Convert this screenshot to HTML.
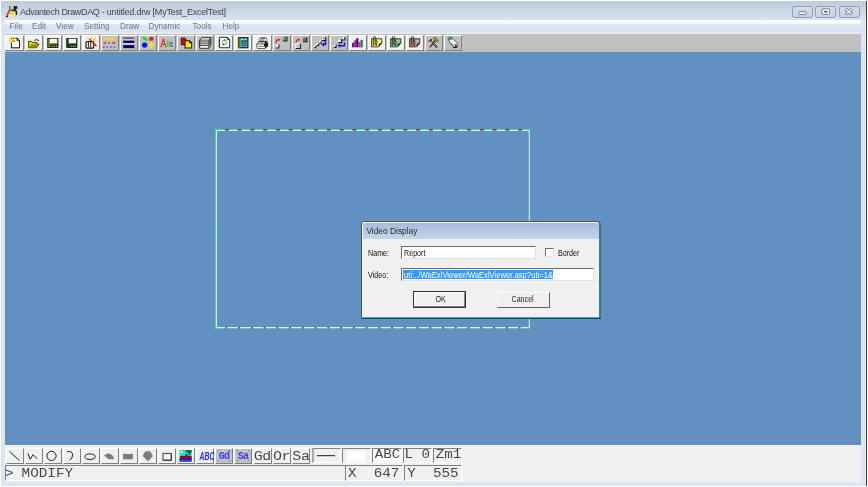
<!DOCTYPE html>
<html>
<head>
<meta charset="utf-8">
<title>Advantech DrawDAQ</title>
<style>
html,body{margin:0;padding:0;}
body{width:868px;height:487px;background:#fff;position:relative;overflow:hidden;font-family:"Liberation Sans",sans-serif;}
.abs{position:absolute;}
#frame{left:1px;top:1px;width:865px;height:485px;background:#dbe5f3;}
#rline{left:866px;top:1px;width:1px;height:485px;background:#3c3c3c;}
#title{left:1px;top:1px;width:865px;height:19px;background:linear-gradient(#bfcbdb,#cbd7e6 50%,#d6e3f1);}
#ttext{left:20px;top:6px;font-size:9px;line-height:12px;letter-spacing:-0.26px;color:#3c444e;white-space:nowrap;}
#menu{left:5px;top:20px;width:856px;height:14.4px;background:linear-gradient(#ffffff 0,#fbfcfe 18%,#eef2f8 30%,#dde6f3 35%,#d6e0ef 80%,#e4e9f0 90%,#e8ecf0 100%);}
.mi{position:absolute;top:21px;font-size:8.2px;line-height:12px;color:#6c7786;white-space:nowrap;}
#tbar{left:5px;top:34px;width:856px;height:18px;background:#c0c0c0;}
.tb{position:absolute;top:1px;width:16.1px;height:14px;border-top:1px solid #fff;border-left:1px solid #fff;border-right:1px solid #808080;border-bottom:1px solid #808080;box-sizing:content-box;background:#c0c0c0;}
.tb.l{background:#f0f0f0;}
.tb svg{position:absolute;left:0;top:0;width:16.1px;height:14px;}
#canvas{left:5px;top:52px;width:856px;height:393.4px;background:#6190c1;}
#bottom{left:5px;top:445.4px;width:856px;height:36.2px;background:#f0f0f0;}
.bb{position:absolute;top:2.6px;width:15.3px;height:14px;border-top:1px solid #fff;border-left:1px solid #fff;border-right:1px solid #808080;border-bottom:1px solid #808080;background:#f0f0f0;}
.bb.g{background:#c0c0c0;}
.bb svg{position:absolute;left:0;top:0;width:15.3px;height:14px;}
.mono{font-family:"Liberation Mono",monospace;color:#484848;white-space:pre;transform:scaleY(0.9);transform-origin:0 78%;}
.sunk{position:absolute;border-top:1px solid #808080;border-left:1px solid #808080;border-right:1px solid #fff;border-bottom:1px solid #fff;box-sizing:border-box;}
#dlg{left:361px;top:221px;width:240px;height:98px;}
#dlgin{left:1px;top:1px;width:238px;height:96px;}
#dlgt{left:1px;top:1px;width:236px;height:15.5px;background:linear-gradient(#a7bbd7,#c4d7ef);border-radius:2px 2px 0 0;}
#dlgc{left:1px;top:16.5px;width:236px;height:78.5px;background:#f0f0f0;}
.dt{position:absolute;font-size:9.5px;line-height:12px;color:#101010;white-space:nowrap;}
.inp{position:absolute;background:#fff;border-top:1px solid #6a6a6a;border-left:1px solid #6a6a6a;border-right:1px solid #e0e0e0;border-bottom:1px solid #e0e0e0;box-sizing:border-box;}
.btn{position:absolute;box-sizing:border-box;background:#f0f0f0;border-top:1px solid #fff;border-left:1px solid #fff;border-right:1px solid #606060;border-bottom:1px solid #606060;font-size:9.5px;line-height:13px;text-align:center;color:#202020;}
.sx{transform:scaleX(0.84);transform-origin:0 0;font-size:8.5px;}
.bt{display:block;transform:scaleX(0.84);transform-origin:50% 50%;font-size:8.5px;line-height:13px;position:relative;}
.bl{position:absolute;left:0;top:2.4px;width:100%;text-align:center;font-size:9.4px;line-height:13.6px;margin-top:-1px;color:#2828f0;font-family:"Liberation Sans",sans-serif;}
.bm{font-family:"Liberation Mono",monospace;font-weight:bold;font-size:10px;letter-spacing:-0.7px;top:2px;color:#3c3cf4;}
.bi{font-style:italic;font-weight:bold;transform:scaleX(0.66);transform-origin:50% 50%;font-size:10.4px;top:2px;}
.d{position:absolute;width:1px;height:1px;background:#707070;}
.bt2{position:absolute;left:-0.9px;top:-0.2px;font-size:15px;line-height:15px;letter-spacing:-0.4px;}
.pt{position:absolute;left:1.4px;top:-1.8px;font-size:14.2px;line-height:15px;}
.st{position:absolute;top:-0.2px;font-size:14.3px;line-height:15px;}
.cap{top:6px;width:21.2px;height:11.5px;box-sizing:border-box;border:1px solid #8f9db3;border-radius:2.5px;background:linear-gradient(#d3ddeb,#c6d2e3);}
</style>
</head>
<body>
<div id="root" class="abs" style="left:0;top:0;width:868px;height:487px;will-change:transform;">
<div id="frame" class="abs"></div>
<div id="rline" class="abs"></div>
<div id="title" class="abs"></div>
<svg class="abs" style="left:5px;top:5px;width:14px;height:13px" viewBox="5 5 14 13">
<path d="M13.6 6 L17.2 6 L17.4 8.6 L15.8 9.6 L17.2 11.6 L17 14.6 L15 16.4 L14 12 Z" fill="#202020"/>
<path d="M8.4 11.6 L15.2 10.8 L16 15.4 L13.6 17 L9.6 16.8 L8 14.6 Z" fill="#f0ee60"/>
<path d="M9.4 13 L14.6 12.2 L15.2 14.8 L12.6 16.2 L9.6 15.4 Z" fill="#f8f890"/>
<path d="M8.8 6 L10.4 6.2 L10.8 9.2 L9.6 9.6 Z" fill="#10a020"/>
<path d="M11.2 6.8 L12.8 6.4 L13 10.8 L11.4 11 Z" fill="#e0d820"/>
<circle cx="9.6" cy="10.6" r="1.3" fill="#d818c8"/>
<circle cx="13.6" cy="10.4" r="1.4" fill="#1838e0"/>
<path d="M11 10.8 L12.8 9.4" stroke="#f02010" stroke-width="1.4"/>
<path d="M8.8 11.6 L7 15.8" stroke="#f01010" stroke-width="1.5"/>
<path d="M5.8 16.4 L8 16.6" stroke="#800808" stroke-width="1.3"/>
<path d="M10 13.2 L13.8 14.4" stroke="#808050" stroke-width="0.7"/>
</svg>
<div id="ttext" class="abs"><span style="letter-spacing:-0.36px">Advantech DrawDAQ</span><span style="letter-spacing:-0.21px"> - untitled.drw [MyTest_ExcelTest]</span></div>
<div class="abs cap" style="left:791.5px"></div>
<div class="abs cap" style="left:815.3px"></div>
<div class="abs cap" style="left:838.5px"></div>
<svg class="abs" style="left:790px;top:5px;width:72px;height:14px" viewBox="790 5 72 14">
<rect x="798.6" y="11.6" width="7.6" height="3" rx="1.3" fill="#eef1f6" stroke="#6c7686" stroke-width="0.9"/>
<rect x="821.8" y="8.8" width="7.8" height="5.6" rx="1" fill="#eef1f6" stroke="#6c7686" stroke-width="0.9"/>
<rect x="824.2" y="11" width="3.2" height="1.4" fill="#404854"/>
<path d="M845.6 8.8 L852 14.4 M852 8.8 L845.6 14.4" stroke="#6c7686" stroke-width="3"/>
<path d="M845.8 9 L851.8 14.2 M851.8 9 L845.8 14.2" stroke="#f4f6fa" stroke-width="1.5"/>
</svg>
<div id="menu" class="abs"></div>
<div class="mi" style="left:9.5px">File</div>
<div class="mi" style="left:32px">Edit</div>
<div class="mi" style="left:56px">View</div>
<div class="mi" style="left:84px">Setting</div>
<div class="mi" style="left:120px">Draw</div>
<div class="mi" style="left:148.5px">Dynamic</div>
<div class="mi" style="left:192.5px">Tools</div>
<div class="mi" style="left:222.5px">Help</div>
<div id="tbar" class="abs">
<div class="tb l" style="left:0.45px"><svg viewBox="0 1.2 16 14.19" preserveAspectRatio="none"><g transform="translate(0 0.7)"><path d="M5.4 2.8 L11 2.8 L13.4 5.2 L13.4 12.4 L5.4 12.4 Z" fill="#fdfdfd" stroke="#202020" stroke-width="1"/><path d="M11 2.8 L11 5.2 L13.4 5.2" fill="none" stroke="#202020" stroke-width="0.9"/><path d="M5.6 12.6 L13.4 12.6" stroke="#606060" stroke-width="0.8"/><g transform="translate(6.6 5)"><path d="M0 0 L-3.6 -2.6 M0 0 L-0.6 -3.4 M0 0 L2.6 -2.8 M0 0 L-3.8 0.6 M0 0 L-2.2 2.8 M0 0 L1.6 2.2 M0 0 L3.6 0.4" stroke="#f0e810" stroke-width="1.1"/><circle cx="0" cy="0" r="1.6" fill="#e0d820"/><circle cx="1.2" cy="0.6" r="0.8" fill="#505038"/><circle cx="0.2" cy="-0.4" r="0.5" fill="#fafaf0"/></g></g></svg></div>
<div class="tb l" style="left:19.52px"><svg viewBox="0 1.2 16 14.19" preserveAspectRatio="none"><g transform="translate(0 0.7)"><path d="M2.6 12.4 L2.6 6 L5.4 6 L6.2 7 L10.6 7 L10.6 8.6 L13 8.6 L10.4 12.4 Z" fill="#e0e000" stroke="#303000" stroke-width="0.9"/><path d="M2.8 12.2 L5.2 8.8 L12.6 8.8 L10.2 12.2 Z" fill="#909000"/><path d="M8.4 5.2 Q10.2 3 12.2 4.8" fill="none" stroke="#101010" stroke-width="0.9"/><path d="M11.4 5.4 L12.8 5.6 L12.8 4.2 Z" fill="#101010"/></g></svg></div>
<div class="tb l" style="left:38.60px"><svg viewBox="0 1.2 16 14.19" preserveAspectRatio="none"><g transform="translate(0 0.7)"><rect x="2.7" y="3" width="10.2" height="9.2" fill="#808000" stroke="#141408" stroke-width="0.8"/><rect x="4.7" y="3.3" width="7.3" height="4.9" fill="#f6f6f6"/><path d="M4.7 8.3 L12 8.3" stroke="#303020" stroke-width="0.5"/><rect x="5.3" y="9.2" width="7.4" height="3" fill="#181810"/><rect x="6.4" y="10.3" width="1.2" height="1.2" fill="#d8d8d8"/><rect x="8.6" y="10.3" width="1.2" height="1.2" fill="#d8d8d8"/><rect x="10.7" y="10.3" width="1.2" height="1.2" fill="#d8d8d8"/></g></svg></div>
<div class="tb l" style="left:57.67px"><svg viewBox="0 1.2 16 14.19" preserveAspectRatio="none"><g transform="translate(0 0.7)"><rect x="2.7" y="3" width="10.2" height="9.2" fill="#005c00" stroke="#141408" stroke-width="0.8"/><rect x="4.7" y="3.3" width="7.3" height="4.9" fill="#f6f6f6"/><path d="M4.7 8.3 L12 8.3" stroke="#303020" stroke-width="0.5"/><rect x="5.3" y="9.2" width="7.4" height="3" fill="#181810"/><rect x="6.4" y="10.3" width="1.2" height="1.2" fill="#d8d8d8"/><rect x="8.6" y="10.3" width="1.2" height="1.2" fill="#d8d8d8"/><rect x="10.7" y="10.3" width="1.2" height="1.2" fill="#d8d8d8"/></g></svg></div>
<div class="tb l" style="left:76.75px"><svg viewBox="0 1.2 16 14.19" preserveAspectRatio="none"><g transform="translate(0 0.7)"><rect x="3" y="6" width="7.6" height="6.8" rx="1" fill="#f0f0f0" stroke="#101010" stroke-width="1.1"/><path d="M5.4 6.6 L5.4 12.2 M7.6 6.6 L7.6 12.2" stroke="#303030" stroke-width="1"/><path d="M6.4 3.6 L13.4 11" stroke="#e81010" stroke-width="1.5"/><path d="M5.6 3.6 L4.2 2.4 M6.6 2.8 L6.6 1.4 M7.6 3.6 L9 2.4" stroke="#e0d820" stroke-width="1"/><circle cx="12.2" cy="3.4" r="1" fill="#f0e020"/><circle cx="10.8" cy="4.6" r="0.8" fill="#60c040"/><circle cx="13" cy="5.4" r="0.7" fill="#f0c020"/></g></svg></div>
<div class="tb g" style="left:95.83px"><svg viewBox="0 1.2 16 14.19" preserveAspectRatio="none"><g transform="translate(0 0.7)"><g transform="translate(-0.5 -0.2)"><rect x="1.9" y="2.6" width="11.8" height="1.6" fill="#e8e020"/><rect x="1.9" y="6.8" width="2.9" height="1.8" fill="#f04040"/><rect x="6.6" y="6.8" width="1.6" height="1.8" fill="#f04040"/><rect x="10.4" y="6.8" width="3.2" height="1.8" fill="#f04040"/><rect x="1.6" y="11.2" width="1.6" height="1.5" fill="#5050f0"/><rect x="5" y="11.2" width="1.5" height="1.5" fill="#5050f0"/><rect x="8.5" y="11.2" width="1.6" height="1.5" fill="#5050f0"/><rect x="12" y="11.2" width="1.6" height="1.5" fill="#5050f0"/></g></g></svg></div>
<div class="tb g" style="left:114.90px"><svg viewBox="0 1.2 16 14.19" preserveAspectRatio="none"><g transform="translate(0 0.7)"><rect x="2.2" y="2" width="11" height="1.2" fill="#383870"/><rect x="2.2" y="3.5" width="11" height="1.6" fill="#d4d0b4"/><rect x="2.2" y="5.2" width="11" height="2.3" fill="#00006a"/><rect x="2.2" y="7.6" width="11" height="2" fill="#d4d0b4"/><rect x="2.2" y="9.7" width="11" height="3.1" fill="#00006a"/></g></svg></div>
<div class="tb g" style="left:133.97px"><svg viewBox="0 1.2 16 14.19" preserveAspectRatio="none"><g transform="translate(0 0.7)"><ellipse cx="5" cy="3.3" rx="3" ry="1.5" transform="rotate(28 5 3.3)" fill="#10e020"/><rect x="9.2" y="1.6" width="4" height="3.6" fill="#f01010"/><circle cx="4.6" cy="9.7" r="2.7" fill="#1010f0"/><path d="M11.4 7.2 L12.5 8.7 L14 9.7 L12.5 10.7 L11.4 12.2 L10.3 10.7 L8.8 9.7 L10.3 8.7 Z" fill="#f4f000" stroke="#f4f000" stroke-width="0.6" stroke-linejoin="round"/></g></svg></div>
<div class="tb g" style="left:153.05px"><svg viewBox="0 1.2 16 14.19" preserveAspectRatio="none"><g transform="translate(0 0.7)"><text x="1.4" y="11.9" font-family="Liberation Sans, sans-serif" font-size="11.4" fill="#f02030" stroke="#f02030" stroke-width="0.35" textLength="5.8" lengthAdjust="spacingAndGlyphs">A</text><text x="7.4" y="11.9" font-family="Liberation Sans, sans-serif" font-weight="bold" font-size="9" fill="#18d828" textLength="3.6" lengthAdjust="spacingAndGlyphs">B</text><text x="11.2" y="11.9" font-family="Liberation Sans, sans-serif" font-weight="bold" font-size="8.8" fill="#1010f0" textLength="2.6" lengthAdjust="spacingAndGlyphs">c</text></g></svg></div>
<div class="tb g" style="left:172.12px"><svg viewBox="0 1.2 16 14.19" preserveAspectRatio="none"><g transform="translate(0 0.7)"><path d="M3.2 2.6 L6.8 2.6 L8.2 4 L8.2 9.4 L3.2 9.4 Z" fill="#f00000" stroke="#281010" stroke-width="0.9"/><path d="M7 5.2 L11.4 5.2 L13.6 7.4 L13.6 12.6 L7 12.6 Z" fill="#f4f000" stroke="#101028" stroke-width="1"/><path d="M11.4 5.2 L11.4 7.4 L13.6 7.4" fill="none" stroke="#101028" stroke-width="0.9"/></g></svg></div>
<div class="tb g" style="left:191.20px"><svg viewBox="0 1.2 16 14.19" preserveAspectRatio="none"><g transform="translate(0 0.7)"><g transform="translate(8 7.6) scale(1.06 1.12) translate(-8 -7.6)"><path d="M3 5 L3 12.4 L11.6 12.4 L13.4 9.8 L13.4 2.8 L5 2.8 Z" fill="#f6f6f6" stroke="#181818" stroke-width="0.8"/><path d="M3 5 L11.6 5 L13.4 2.8 M11.6 5 L11.6 12.4" fill="none" stroke="#181818" stroke-width="0.7"/><path d="M2.2 6.6 L11.6 6.6 L13.4 4.4 M2.2 8.2 L11.6 8.2 L13.4 6 M2.2 9.8 L11.6 9.8 L13.4 7.6" fill="none" stroke="#202020" stroke-width="0.8"/><rect x="3.4" y="7" width="7.8" height="0.9" fill="#b0b0b0"/></g></g></svg></div>
<div class="tb l" style="left:210.27px"><svg viewBox="0 1.2 16 14.19" preserveAspectRatio="none"><g transform="translate(0 0.7)"><path d="M3.4 1.8 L11.2 1.8 L13.6 4.2 L13.6 12.4 L3.4 12.4 Z" fill="#fcfcfc" stroke="#181818" stroke-width="0.9"/><path d="M11.2 1.8 L11.2 4.2 L13.6 4.2" fill="none" stroke="#181818" stroke-width="0.8"/><path d="M2.6 5 L3.6 5 M2.6 7 L3.6 7 M2.6 9 L3.6 9 M2.6 11 L3.6 11" stroke="#101010" stroke-width="0.7"/><circle cx="8.3" cy="7" r="2.2" fill="none" stroke="#58b868" stroke-width="1" stroke-dasharray="2.6 0.9"/><circle cx="8.6" cy="4.6" r="0.9" fill="#108028"/><circle cx="7.6" cy="9.2" r="1" fill="#108028"/></g></svg></div>
<div class="tb l" style="left:229.35px"><svg viewBox="0 1.2 16 14.19" preserveAspectRatio="none"><g transform="translate(0 0.7)"><rect x="3.4" y="2.2" width="9.4" height="10.2" fill="#38b8b8" stroke="#101010" stroke-width="1.1"/><rect x="3.2" y="2.2" width="1.7" height="10.2" fill="#707010"/><rect x="6" y="3.4" width="5.8" height="1" fill="#a0f0f0"/><rect x="6" y="5" width="2.4" height="1.2" fill="#702020"/><rect x="9.3" y="5" width="2.4" height="1.2" fill="#702020"/><path d="M6 7.4 L11.8 7.4 M6 9.2 L11.8 9.2 M6 11 L11.8 11" stroke="#90f0f0" stroke-width="0.9" stroke-dasharray="1.4 0.9"/><path d="M8.85 3.2 L8.85 12 M7.3 6.6 L7.3 12 M10.4 6.6 L10.4 12 M5.4 6.5 L12.2 6.5 M5.4 8.3 L12.2 8.3 M5.4 10.1 L12.2 10.1" stroke="#185858" stroke-width="0.6"/></g></svg></div>
<div class="tb l" style="left:248.42px"><svg viewBox="0 1.2 16 14.19" preserveAspectRatio="none"><g transform="translate(0 0.7)"><path d="M6 2.2 L12 2.2 L13.4 6 L5 6 Z" fill="#e8e8e8" stroke="#404040" stroke-width="0.7"/><path d="M7.4 3 L11 3" stroke="#3030a0" stroke-width="0.9"/><path d="M6.8 4.6 L9.4 4.6" stroke="#902020" stroke-width="0.9"/><path d="M2.4 9.4 L5 6 L11.4 6 L13.6 7.6 L13.6 10.6 L11 13 L3.4 13 Z" fill="#b8b8b8" stroke="#202020" stroke-width="0.8"/><path d="M11.4 6 L13.8 7.6 L13.8 10.6 L11.2 12.8 L9.6 9.6 Z" fill="#202020"/><path d="M2.6 9.6 L9.6 9.6 L11 12.6 L3.6 12.6 Z" fill="#f4f4f4"/><rect x="6.6" y="7.6" width="2.2" height="1.2" fill="#30b040"/><path d="M3.6 11 L10 11" stroke="#404040" stroke-width="0.6"/></g></svg></div>
<div class="tb g" style="left:267.50px"><svg viewBox="0 1.2 16 14.19" preserveAspectRatio="none"><g transform="translate(0 0.7)"><g transform="translate(-0.9 -0.2)"><rect x="9.4" y="0.9" width="4.4" height="4.8" fill="#808080"/><path d="M13.8 1 L13.8 5.8 L9.4 5.8" fill="none" stroke="#202020" stroke-width="1"/><path d="M9.4 5.6 L9.4 1.1 L13.6 1.1" fill="none" stroke="#d0d0d0" stroke-width="0.7"/><path d="M3 8 Q2.6 4.6 5.6 4.4" fill="none" stroke="#f01010" stroke-width="1.1"/><path d="M5.2 2.9 L7.4 4.4 L5.2 6 Z" fill="#f01010"/><rect x="2.4" y="9.4" width="3.2" height="3.2" fill="#f0f0f0"/><path d="M5.8 9.4 L5.8 12.8 L2.4 12.8" fill="none" stroke="#202020" stroke-width="1"/></g></g></svg></div>
<div class="tb g" style="left:286.57px"><svg viewBox="0 1.2 16 14.19" preserveAspectRatio="none"><g transform="translate(0 0.7)"><rect x="9.8" y="2" width="4" height="4.4" fill="#707070"/><path d="M13.8 2 L13.8 6.4 L9.8 6.4" fill="none" stroke="#181818" stroke-width="1.1"/><path d="M3.2 7.4 Q2.8 4.4 5.6 4.2" fill="none" stroke="#f01010" stroke-width="1.1"/><path d="M5.2 2.7 L7.4 4.2 L5.2 5.8 Z" fill="#f01010"/><rect x="2.6" y="8.2" width="4.6" height="4.6" fill="#d8d8d8"/><path d="M2.6 12.8 L2.6 8.2 L7.2 8.2" fill="none" stroke="#fafafa" stroke-width="1"/><path d="M7.4 8.4 L7.4 13.2 L2.8 13.2" fill="none" stroke="#181818" stroke-width="1.1"/><path d="M4.9 8.2 L4.9 13 M2.6 10.6 L7.2 10.6" stroke="#b0b0b0" stroke-width="0.6"/></g></svg></div>
<div class="tb g" style="left:305.65px"><svg viewBox="0 1.2 16 14.19" preserveAspectRatio="none"><g transform="translate(0 0.7)"><rect x="9.8" y="1.1" width="3.8" height="3.8" fill="#f0f0f0"/><path d="M13.7 1.4 L13.7 5 L10 5" fill="none" stroke="#101010" stroke-width="1.1"/><path d="M11.8 1.2 L11.8 4.6 M10 3 L13.4 3" stroke="#707070" stroke-width="0.6"/><path d="M3 12 L9.6 6" stroke="#505050" stroke-width="0.7"/><rect x="1.8" y="10.2" width="2" height="2" fill="#fafafa"/><path d="M4.0 10.6 L4.0 12.5 L2.2 12.5" fill="none" stroke="#101010" stroke-width="1"/><rect x="4.4" y="7.9" width="2" height="2" fill="#fafafa"/><path d="M6.6000000000000005 8.3 L6.6000000000000005 10.2 L4.800000000000001 10.2" fill="none" stroke="#101010" stroke-width="1"/><rect x="7" y="5.5" width="2" height="2" fill="#fafafa"/><path d="M9.2 5.9 L9.2 7.8 L7.4 7.8" fill="none" stroke="#101010" stroke-width="1"/><path d="M13.4 5.8 L13.4 9.2 L11 9.2" fill="none" stroke="#1010f0" stroke-width="1.5"/><path d="M9.3 9.2 L11.9 7.1 L11.9 11.3 Z" fill="#1010f0"/></g></svg></div>
<div class="tb g" style="left:324.72px"><svg viewBox="0 1.2 16 14.19" preserveAspectRatio="none"><g transform="translate(0 0.7)"><rect x="11.2" y="1.1" width="2.5" height="3.3" fill="#e8e8e8"/><path d="M13.8 1.4 L13.8 4.6 L11.4 4.6" fill="none" stroke="#101010" stroke-width="1"/><rect x="7.1" y="4.2" width="3.2" height="2.9" fill="#f4f4f4"/><path d="M10.6 3.6 L10.6 7.3 L7.4 7.3" fill="none" stroke="#101010" stroke-width="1.2"/><path d="M5 10.4 L7.4 8" stroke="#606060" stroke-width="0.7"/><rect x="2.5" y="9.5" width="2.2" height="2.2" fill="#f4f4f4"/><path d="M5 9.8 L5 12.2 L2.8 12.2" fill="none" stroke="#101010" stroke-width="1.1"/><path d="M13.4 7 L13.4 10.4 L8.6 10.4" fill="none" stroke="#1010f0" stroke-width="1.5"/><path d="M6.4 10.4 L9.2 8.4 L9.2 12.4 Z" fill="#1010f0"/></g></svg></div>
<div class="tb l" style="left:343.80px"><svg viewBox="0 1.2 16 14.19" preserveAspectRatio="none"><g transform="translate(0 0.7)"><g transform="translate(-0.6 0)"><path d="M2.4 3.4 L13 3.4 M2.4 5.4 L13 5.4" stroke="#e0e0e0" stroke-width="0.5"/><rect x="2.7" y="7.3" width="2.1" height="4.4" fill="#1818f0"/><rect x="4.8" y="4.9" width="2" height="6.8" fill="#f01010"/><rect x="6.8" y="2.8" width="2.1" height="8.9" fill="#101090"/><rect x="8.9" y="6.6" width="2.1" height="5.1" fill="#f010f0"/><rect x="11" y="4.5" width="2.3" height="7.2" fill="#109030"/><path d="M2.4 12.2 L13.6 12.2" stroke="#b0b0b0" stroke-width="0.8"/></g></g></svg></div>
<div class="tb l" style="left:362.88px"><svg viewBox="0 1.2 16 14.19" preserveAspectRatio="none"><g transform="translate(0 0.7)"><path d="M2.6 3.3 L12.7 3.3 L12.7 7.8 L9.5 11.5 L2.6 11.5 Z" fill="#f0ec58" stroke="#181818" stroke-width="0.8" stroke-linejoin="round"/><path d="M12.9 7.6 L9.9 8.3 L9.5 11.7 Z" fill="#181818"/><path d="M8.6 5.2 L12 5.2 M8.6 6.7 L11.6 6.7" stroke="#fcfcc8" stroke-width="0.8"/><path d="M4.3 10.2 L4.3 2.6 Q4.3 1 5.5 1 Q6.7 1 6.7 2.6 L6.7 9.6 Q6.9 10.4 7.6 9.8 L7.9 5.6 Q7.5 4.4 6.8 5.2" fill="none" stroke="#202020" stroke-width="0.85"/><path d="M5.5 9.8 L5.5 3" stroke="#a09820" stroke-width="0.8"/><path d="M7.2 9 L7.4 6" stroke="#8090b0" stroke-width="0.6"/></g></svg></div>
<div class="tb l" style="left:381.95px"><svg viewBox="0 1.2 16 14.19" preserveAspectRatio="none"><g transform="translate(0 0.7)"><path d="M2.6 3.3 L12.7 3.3 L12.7 7.8 L9.5 11.5 L2.6 11.5 Z" fill="#78b880" stroke="#181818" stroke-width="0.8" stroke-linejoin="round"/><path d="M12.9 7.6 L9.9 8.3 L9.5 11.7 Z" fill="#181818"/><path d="M8.6 5.2 L12 5.2 M8.6 6.7 L11.6 6.7" stroke="#a8d8b0" stroke-width="0.8"/><path d="M4.3 10.2 L4.3 2.6 Q4.3 1 5.5 1 Q6.7 1 6.7 2.6 L6.7 9.6 Q6.9 10.4 7.6 9.8 L7.9 5.6 Q7.5 4.4 6.8 5.2" fill="none" stroke="#202020" stroke-width="0.85"/><path d="M5.5 9.8 L5.5 3" stroke="#407848" stroke-width="0.8"/><path d="M7.2 9 L7.4 6" stroke="#8090b0" stroke-width="0.6"/></g></svg></div>
<div class="tb l" style="left:401.02px"><svg viewBox="0 1.2 16 14.19" preserveAspectRatio="none"><g transform="translate(0 0.7)"><path d="M2.6 3.3 L12.7 3.3 L12.7 7.8 L9.5 11.5 L2.6 11.5 Z" fill="#c09890" stroke="#181818" stroke-width="0.8" stroke-linejoin="round"/><path d="M12.9 7.6 L9.9 8.3 L9.5 11.7 Z" fill="#181818"/><path d="M8.6 5.2 L12 5.2 M8.6 6.7 L11.6 6.7" stroke="#dcc0b8" stroke-width="0.8"/><path d="M4.3 10.2 L4.3 2.6 Q4.3 1 5.5 1 Q6.7 1 6.7 2.6 L6.7 9.6 Q6.9 10.4 7.6 9.8 L7.9 5.6 Q7.5 4.4 6.8 5.2" fill="none" stroke="#202020" stroke-width="0.85"/><path d="M5.5 9.8 L5.5 3" stroke="#805850" stroke-width="0.8"/><path d="M7.2 9 L7.4 6" stroke="#8090b0" stroke-width="0.6"/></g></svg></div>
<div class="tb g" style="left:420.10px"><svg viewBox="0 1.2 16 14.19" preserveAspectRatio="none"><g transform="translate(0 0.7)"><path d="M3.8 12 L9.4 5.2" stroke="#582020" stroke-width="1.4"/><path d="M7.4 2.6 L9.4 1.6 L12.6 5.4 L11.6 6.8 L9.8 5.2 L8.6 5.6 Z" fill="#a0a018" stroke="#303000" stroke-width="0.5"/><path d="M11 12 L6 6.4" stroke="#202020" stroke-width="1.9"/><path d="M10.6 11.6 L6.4 6.8" stroke="#c8c8c8" stroke-width="0.7"/><path d="M5.6 3.6 Q6.4 6.2 4 6.4 Q2 6.2 2.2 4.6 L3.6 5.2 L4.6 4.6 L4.2 3.4 Z" fill="#181818"/></g></svg></div>
<div class="tb g" style="left:439.17px"><svg viewBox="0 1.2 16 14.19" preserveAspectRatio="none"><g transform="translate(0 0.7)"><path d="M2.8 2.2 L6.6 1.4 L7.4 3.2 L3.8 4.4 Z" fill="#10b0b0" stroke="#106060" stroke-width="0.5"/><path d="M3.8 4.4 L7.4 3.2 L11.4 6.8 L12.6 9.2 L12.4 11.4 L11 11.6 L10.6 10 L9.6 12.2 L8 12.2 L8.2 9.8 L7 10.2 L6.4 8 L5 8.2 Z" fill="#f8f8f8" stroke="#383838" stroke-width="0.7"/><path d="M10.4 9.8 L11 8.4 M8.4 9.8 L9 8.6" stroke="#404040" stroke-width="0.7" fill="none"/><path d="M8.4 12.4 L12.2 11.8" stroke="#202020" stroke-width="1.1"/><path d="M10.2 9.2 L12 10.8 M9.6 10.6 L10.6 12" stroke="#202020" stroke-width="0.9"/></g></svg></div>
</div>
<div id="canvas" class="abs">
<svg class="abs" style="left:0;top:0;width:856px;height:393.4px" viewBox="5 52 856 393.4">
<rect x="215.5" y="129.5" width="314" height="199" fill="none" stroke="#48d8a0" stroke-width="1"/>
<rect x="216.5" y="130.5" width="312" height="197" fill="none" stroke="#e4e6ee" stroke-width="1"/>
<path d="M529.5 130 L529.5 328" stroke="#a8f0d0" stroke-width="1"/>
<path d="M528.5 132 L528.5 327" stroke="#7ca4cc" stroke-width="1"/>
<rect x="224.90" y="129" width="4" height="1.6" fill="#604848"/><rect x="237.65" y="129" width="4" height="1.6" fill="#604848"/><rect x="250.40" y="129" width="4" height="1.6" fill="#604848"/><rect x="263.15" y="129" width="4" height="1.6" fill="#604848"/><rect x="275.90" y="129" width="4" height="1.6" fill="#604848"/><rect x="288.65" y="129" width="4" height="1.6" fill="#604848"/><rect x="301.40" y="129" width="4" height="1.6" fill="#604848"/><rect x="314.15" y="129" width="4" height="1.6" fill="#604848"/><rect x="326.90" y="129" width="4" height="1.6" fill="#604848"/><rect x="339.65" y="129" width="4" height="1.6" fill="#604848"/><rect x="352.40" y="129" width="4" height="1.6" fill="#604848"/><rect x="365.15" y="129" width="4" height="1.6" fill="#604848"/><rect x="377.90" y="129" width="4" height="1.6" fill="#604848"/><rect x="390.65" y="129" width="4" height="1.6" fill="#604848"/><rect x="403.40" y="129" width="4" height="1.6" fill="#604848"/><rect x="416.15" y="129" width="4" height="1.6" fill="#604848"/><rect x="428.90" y="129" width="4" height="1.6" fill="#604848"/><rect x="441.65" y="129" width="4" height="1.6" fill="#604848"/><rect x="454.40" y="129" width="4" height="1.6" fill="#604848"/><rect x="467.15" y="129" width="4" height="1.6" fill="#604848"/><rect x="479.90" y="129" width="4" height="1.6" fill="#604848"/><rect x="492.65" y="129" width="4" height="1.6" fill="#604848"/><rect x="505.40" y="129" width="4" height="1.6" fill="#604848"/><rect x="518.15" y="129" width="4" height="1.6" fill="#604848"/><rect x="225.30" y="327.1" width="2" height="1.5" fill="#604848"/><rect x="238.05" y="327.1" width="2" height="1.5" fill="#604848"/><rect x="250.80" y="327.1" width="2" height="1.5" fill="#604848"/><rect x="263.55" y="327.1" width="2" height="1.5" fill="#604848"/><rect x="276.30" y="327.1" width="2" height="1.5" fill="#604848"/><rect x="289.05" y="327.1" width="2" height="1.5" fill="#604848"/><rect x="301.80" y="327.1" width="2" height="1.5" fill="#604848"/><rect x="314.55" y="327.1" width="2" height="1.5" fill="#604848"/><rect x="327.30" y="327.1" width="2" height="1.5" fill="#604848"/><rect x="340.05" y="327.1" width="2" height="1.5" fill="#604848"/><rect x="352.80" y="327.1" width="2" height="1.5" fill="#604848"/><rect x="365.55" y="327.1" width="2" height="1.5" fill="#604848"/><rect x="378.30" y="327.1" width="2" height="1.5" fill="#604848"/><rect x="391.05" y="327.1" width="2" height="1.5" fill="#604848"/><rect x="403.80" y="327.1" width="2" height="1.5" fill="#604848"/><rect x="416.55" y="327.1" width="2" height="1.5" fill="#604848"/><rect x="429.30" y="327.1" width="2" height="1.5" fill="#604848"/><rect x="442.05" y="327.1" width="2" height="1.5" fill="#604848"/><rect x="454.80" y="327.1" width="2" height="1.5" fill="#604848"/><rect x="467.55" y="327.1" width="2" height="1.5" fill="#604848"/><rect x="480.30" y="327.1" width="2" height="1.5" fill="#604848"/><rect x="493.05" y="327.1" width="2" height="1.5" fill="#604848"/><rect x="505.80" y="327.1" width="2" height="1.5" fill="#604848"/><rect x="518.55" y="327.1" width="2" height="1.5" fill="#604848"/>
<circle cx="215.3" cy="129.2" r="1.4" fill="none" stroke="#30c890" stroke-width="0.8"/>
<circle cx="529.6" cy="129.2" r="1.6" fill="#38c890"/>
<circle cx="215.3" cy="328.6" r="1.4" fill="none" stroke="#30c890" stroke-width="0.8"/>
<circle cx="214.8" cy="229" r="1" fill="#38d098"/>
</svg>
</div>
<div id="bottom" class="abs">
<div class="bb " style="left:1.30px"><svg viewBox="0 0.5 15.3 14" preserveAspectRatio="none"><path d="M2.5 2.8 L12.3 12" stroke="#202020" stroke-width="1" fill="none"/></svg></div>
<div class="bb " style="left:20.30px"><svg viewBox="0 0.5 15.3 14" preserveAspectRatio="none"><path d="M1.9 5 L4.2 10.8 L7.1 6.2 L11.1 10.2" stroke="#202020" stroke-width="1" fill="none"/></svg></div>
<div class="bb " style="left:39.30px"><svg viewBox="0 0.5 15.3 14" preserveAspectRatio="none"><circle cx="6.5" cy="7.4" r="4.6" stroke="#202020" stroke-width="1" fill="none"/></svg></div>
<div class="bb " style="left:58.30px"><svg viewBox="0 0.5 15.3 14" preserveAspectRatio="none"><path d="M3.1 3.3 Q8.2 2 8.6 6.2 Q8.6 10.4 5.6 11.8" stroke="#202020" stroke-width="1" fill="none"/></svg></div>
<div class="bb " style="left:77.30px"><svg viewBox="0 0.5 15.3 14" preserveAspectRatio="none"><ellipse cx="7.1" cy="8.2" rx="5.3" ry="2.8" stroke="#202020" stroke-width="1" fill="none"/></svg></div>
<div class="bb " style="left:96.30px"><svg viewBox="0 0.5 15.3 14" preserveAspectRatio="none"><path d="M2.1 7 Q5.5 4 8.6 5.6 Q11.8 7.4 11.9 10.8 L6.6 10.8 Z" fill="#7c7c7c"/></svg></div>
<div class="bb " style="left:115.30px"><svg viewBox="0 0.5 15.3 14" preserveAspectRatio="none"><rect x="2.1" y="5.4" width="9.8" height="5.4" fill="#7c7c7c"/></svg></div>
<div class="bb " style="left:134.30px"><svg viewBox="0 0.5 15.3 14" preserveAspectRatio="none"><path d="M5.2 2.7 L10.4 2.7 L12.8 7.4 L8 13.1 L2.7 7.4 Z" fill="#7c7c7c"/></svg></div>
<div class="bb " style="left:153.30px"><svg viewBox="0 0.5 15.3 14" preserveAspectRatio="none"><rect x="4" y="5" width="8.2" height="6.6" fill="#f8f8f8" stroke="#585858" stroke-width="1.2"/><path d="M12.4 5.4 L12.4 11.9 L4.4 11.9" fill="none" stroke="#303030" stroke-width="0.9"/></svg></div>
<div class="bb " style="left:172.30px"><svg viewBox="0 0.5 15.3 14" preserveAspectRatio="none"><rect x="1.5" y="1.6" width="12.1" height="11.5" fill="#10d8f0"/><rect x="1.5" y="9.6" width="12.1" height="3.5" fill="#1010f0"/><circle cx="3.6" cy="3.4" r="1.5" fill="#f0f020"/><path d="M7.5 1.6 L13.6 1.6 L13.6 4.6 L10.8 5 L8.4 3.6 Z" fill="#107030"/><path d="M11.4 4 L11.4 7" stroke="#503010" stroke-width="1"/><path d="M2 7.4 L7 7.4 L8.2 5.4 L9.6 5.4 L9.6 7.4 L13.6 7.4 L13.6 10.4 L2 10.4 Z" fill="#901010"/><path d="M2.2 11.8 L13 11.8" stroke="#40a0ff" stroke-width="1" stroke-dasharray="1.2 1"/></svg></div>
<div class="bb " style="left:191.30px"><span class="bl bi">ABC</span></div>
<div class="bb g" style="left:210.30px"><i class="d" style="left:2px;top:1.5px"></i><i class="d" style="right:2px;top:1.5px"></i><i class="d" style="left:2px;bottom:1.5px"></i><i class="d" style="right:2px;bottom:1.5px"></i><span class="bl bm">Gd</span></div>
<div class="bb g" style="left:229.30px"><i class="d" style="left:2px;top:1.5px"></i><i class="d" style="right:2px;top:1.5px"></i><i class="d" style="left:2px;bottom:1.5px"></i><i class="d" style="right:2px;bottom:1.5px"></i><span class="bl bm">Sa</span></div>
<div class="bb" style="left:248.6px;width:16.2px"><span class="mono bt2">Gd</span></div>
<div class="bb" style="left:267.9px;width:16.2px"><span class="mono bt2">Or</span></div>
<div class="bb" style="left:287.2px;width:16.2px"><span class="mono bt2">Sa</span></div>
<div class="sunk" style="left:306.6px;top:2.6px;width:29px;height:15px;border-left:2px solid #a8a8a8;"></div>
<div class="abs" style="left:311.6px;top:10px;width:18.4px;height:1px;background:#404040;box-shadow:0 0.5px 0 #a0a0a0;"></div>
<div class="sunk" style="left:337.2px;top:2.6px;width:28.4px;height:15px;"></div>
<div class="abs" style="left:342px;top:5.6px;width:19.4px;height:10px;background:#fff;"></div>
<div class="sunk" style="left:367.3px;top:2.6px;width:29.6px;height:15px;background:#fafafa;"><span class="mono pt">ABC</span></div>
<div class="sunk" style="left:398px;top:2.6px;width:28.7px;height:15px;"><span class="mono pt" style="left:0.4px">L 0</span></div>
<div class="sunk" style="left:428.3px;top:2.6px;width:28.8px;height:15px;"><span class="mono pt">Zm1</span></div>
<div class="sunk" style="left:0.2px;top:19.6px;width:340px;height:16.2px;border-right:none;"><span class="mono st" style="left:-1.2px">&gt;</span><span class="mono st" style="left:15.4px">MODIFY</span></div>
<div class="sunk" style="left:340.3px;top:19.6px;width:57.4px;height:16.2px;"><span class="mono st" style="left:1.6px">X  647</span></div>
<div class="sunk" style="left:399.2px;top:19.6px;width:57.9px;height:16.2px;"><span class="mono st" style="left:2px">Y  555</span></div>
</div>
<div id="dlg" class="abs">
<svg class="abs" style="left:0;top:0;width:240px;height:98px" viewBox="0 0 240 98">
<path d="M0.5 97.9 L0.5 3.5 Q0.5 0.5 3.5 0.5 L236.5 0.5 Q239.5 0.5 239.5 3.5 L239.5 97.9 Z" fill="#0e4656"/>
<path d="M0.5 97 L0.5 3.5 Q0.5 0.5 3.5 0.5 L236.5 0.5 Q239 0.5 239.2 3" fill="none" stroke="#4a5058" stroke-width="1"/>
<path d="M1 96.4 L1 3.6 Q1 1 3.6 1 L236 1 Q238.3 1 238.3 3.6 L238.3 96.4 Z" fill="#b8f4ff"/>
<path d="M1 95.7 L1 3.6 Q1 1 3.6 1 L236 1 Q237.6 1 237.6 3.6 L237.6 95.7 Z" fill="#f6f8fb"/>
<rect x="1.8" y="17.5" width="235.8" height="78.2" fill="#f0f0f0"/>
</svg>
<div class="abs" style="left:2px;top:2px;width:235.6px;height:15.5px;border-radius:2px 2px 0 0;background:linear-gradient(#a7bbd7,#c4d7ef);"></div>
<div id="dlgin" class="abs">
<div class="dt" id="dtitle" style="left:4.4px;top:2.6px;font-size:8.4px;color:#1c2430;">Video Display</div>
<div class="dt sx" style="left:6.1px;top:24.7px;">Name:</div>
<div class="inp" style="left:38.9px;top:23.6px;width:135px;height:13px;"></div>
<div class="dt sx" style="left:41.9px;top:24.7px;">Report</div>
<div class="abs" id="cb" style="left:182.9px;top:25.6px;width:9px;height:9px;background:#fff;border-top:1px solid #707070;border-left:1px solid #707070;border-right:1px solid #e8e8e8;border-bottom:1px solid #e8e8e8;box-sizing:border-box;"></div>
<div class="dt sx" style="left:195.9px;top:24.7px;">Border</div>
<div class="dt sx" style="left:6.1px;top:46.7px;">Video:</div>
<div class="inp" style="left:38.9px;top:45.6px;width:193px;height:13px;"></div>
<div class="abs" id="hl" style="left:41.4px;top:47.6px;width:150px;height:9.5px;background:#3399ff;"></div>
<div class="dt sx" id="url" style="left:41.9px;top:46.6px;color:#fff;transform:scaleX(0.9);">uti:../WaExlViewer/WaExlViewer.asp?uti=1&amp;</div>
<div class="btn" id="ok" style="left:51.2px;top:69.2px;width:53.2px;height:17px;border:1px solid #303030;"><div style="position:absolute;left:0;top:0;right:0;bottom:0;border-top:1px solid #fff;border-left:1px solid #fff;border-right:1px solid #808080;border-bottom:1px solid #808080;"></div><span class="bt" style="top:0.8px;left:0.4px">OK</span></div>
<div class="btn" id="cancel" style="left:135px;top:70px;width:53.2px;height:15.6px;"><span class="bt" style="left:-1px">Cancel</span></div>
</div>
</div>
</div>
</body>
</html>
